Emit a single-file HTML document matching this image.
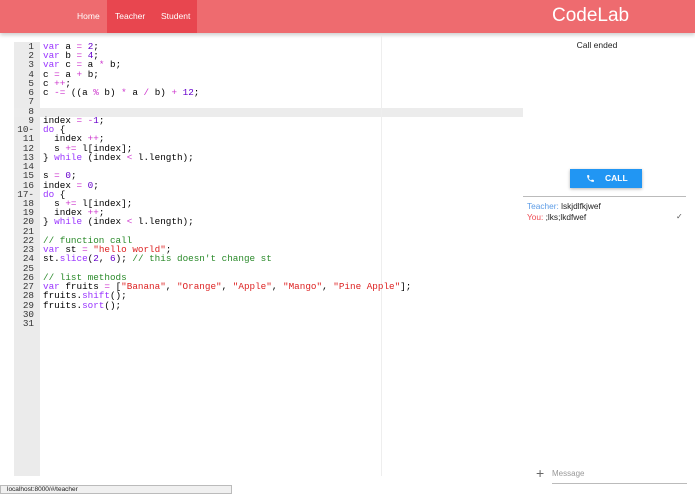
<!DOCTYPE html>
<html><head><style>
body{margin:0;width:695px;height:494px;overflow:hidden;background:#fff;font-family:"Liberation Sans",sans-serif;position:relative}
.hdr{position:absolute;left:0;top:0;width:695px;height:33px;background:#ee6b6f;box-shadow:0 2px 4px rgba(0,0,0,.2)}
.tabs{position:absolute;left:107px;top:0;width:90px;height:33px;background:#e8464f}
.nav{position:absolute;top:11px;color:#fff;font-size:8.5px}
.logo{position:absolute;left:552px;top:5px;color:#fff;font-size:19px}
.gut{position:absolute;left:14px;top:42px;width:26px;height:434px;background:#ebebeb}
.code{position:absolute;left:14px;top:42px;font-family:"Liberation Mono",monospace;font-size:9.3px;line-height:9.23px;color:#000;white-space:pre}
.ln{display:inline-block;width:20px;text-align:right;color:#333;margin-right:9px}
.hl{position:absolute;left:14px;top:107.5px;width:509px;height:9.3px;background:#ececec}
.k{color:#93f}.n{color:#60c}.s{color:#d22}.c{color:#2a8a2a}.o{color:#c3c}
.pm{position:absolute;left:381px;top:36px;width:1px;height:440px;background:#eee}
</style></head><body>
<div class="hdr"><div class="tabs"></div>
<span class="nav" style="left:77px">Home</span><span class="nav" style="left:115px">Teacher</span><span class="nav" style="left:161px">Student</span>
<span class="logo">CodeLab</span></div>
<div class="gut"></div><div class="hl"></div><div class="pm"></div>
<div class="code"><span class="ln">1</span><span class="k">var</span> a <span class="o">=</span> <span class="n">2</span>;
<span class="ln">2</span><span class="k">var</span> b <span class="o">=</span> <span class="n">4</span>;
<span class="ln">3</span><span class="k">var</span> c <span class="o">=</span> a <span class="o">*</span> b;
<span class="ln">4</span>c <span class="o">=</span> a <span class="o">+</span> b;
<span class="ln">5</span>c <span class="o">++</span>;
<span class="ln">6</span>c <span class="o">-=</span> ((a <span class="o">%</span> b) <span class="o">*</span> a <span class="o">/</span> b) <span class="o">+</span> <span class="n">12</span>;
<span class="ln">7</span>
<span class="ln">8</span>
<span class="ln">9</span>index <span class="o">=</span> <span class="o">-</span><span class="n">1</span>;
<span class="ln">10-</span><span class="k">do</span> {
<span class="ln">11</span>  index <span class="o">++</span>;
<span class="ln">12</span>  s <span class="o">+=</span> l[index];
<span class="ln">13</span>} <span class="k">while</span> (index <span class="o">&lt;</span> l.length);
<span class="ln">14</span>
<span class="ln">15</span>s <span class="o">=</span> <span class="n">0</span>;
<span class="ln">16</span>index <span class="o">=</span> <span class="n">0</span>;
<span class="ln">17-</span><span class="k">do</span> {
<span class="ln">18</span>  s <span class="o">+=</span> l[index];
<span class="ln">19</span>  index <span class="o">++</span>;
<span class="ln">20</span>} <span class="k">while</span> (index <span class="o">&lt;</span> l.length);
<span class="ln">21</span>
<span class="ln">22</span><span class="c">// function call</span>
<span class="ln">23</span><span class="k">var</span> st <span class="o">=</span> <span class="s">"hello world"</span>;
<span class="ln">24</span>st.<span class="k">slice</span>(<span class="n">2</span>, <span class="n">6</span>); <span class="c">// this doesn't change st</span>
<span class="ln">25</span>
<span class="ln">26</span><span class="c">// list methods</span>
<span class="ln">27</span><span class="k">var</span> fruits <span class="o">=</span> [<span class="s">"Banana"</span>, <span class="s">"Orange"</span>, <span class="s">"Apple"</span>, <span class="s">"Mango"</span>, <span class="s">"Pine Apple"</span>];
<span class="ln">28</span>fruits.<span class="k">shift</span>();
<span class="ln">29</span>fruits.<span class="k">sort</span>();
<span class="ln">30</span>
<span class="ln">31</span></div>
<div style="position:absolute;left:523px;top:40px;width:150px;text-align:center;font-size:8.5px;color:#222;left:522px">Call ended</div>
<div style="position:absolute;left:570px;top:169px;width:72px;height:19px;background:#2196f3;box-shadow:0 1px 3px rgba(0,0,0,.3);color:#fff;font-size:8.5px;font-weight:bold;line-height:19px">
<svg style="position:absolute;left:16px;top:5px" width="9" height="9" viewBox="0 0 24 24"><path fill="#fff" d="M6.6 10.8c1.4 2.8 3.8 5.1 6.6 6.6l2.2-2.2c.3-.3.7-.4 1-.2 1.1.4 2.3.6 3.6.6.6 0 1 .4 1 1V20c0 .6-.4 1-1 1C10.6 21 3 13.4 3 4c0-.6.4-1 1-1h3.5c.6 0 1 .4 1 1 0 1.3.2 2.5.6 3.6.1.3 0 .7-.2 1z"/></svg>
<span style="position:absolute;left:35px">CALL</span></div>
<div style="position:absolute;left:523px;top:196px;width:163px;height:1px;background:#bbb"></div>
<div style="position:absolute;left:527px;top:201px;font-size:8.3px;color:#222"><span style="color:#5b9be6">Teacher:</span> lskjdlfkjwef</div>
<div style="position:absolute;left:527px;top:212px;font-size:8.3px;color:#222"><span style="color:#ee4a52">You:</span> ;lks;lkdfwef</div>
<div style="position:absolute;left:676px;top:212px;font-size:8px;color:#555">✓</div>
<div style="position:absolute;left:536px;top:465px;font-size:14px;color:#666">+</div>
<div style="position:absolute;left:552px;top:469px;font-size:8px;color:#999">Message</div>
<div style="position:absolute;left:552px;top:483px;width:135px;height:1px;background:#bbb"></div>
<div style="position:absolute;left:0;top:485px;width:232px;height:9px;background:#f0f0f0;border:1px solid #bbb;box-sizing:border-box;font-size:6.5px;line-height:8px;color:#222;padding-left:6px">localhost:8000/#/teacher</div>
</body></html>
